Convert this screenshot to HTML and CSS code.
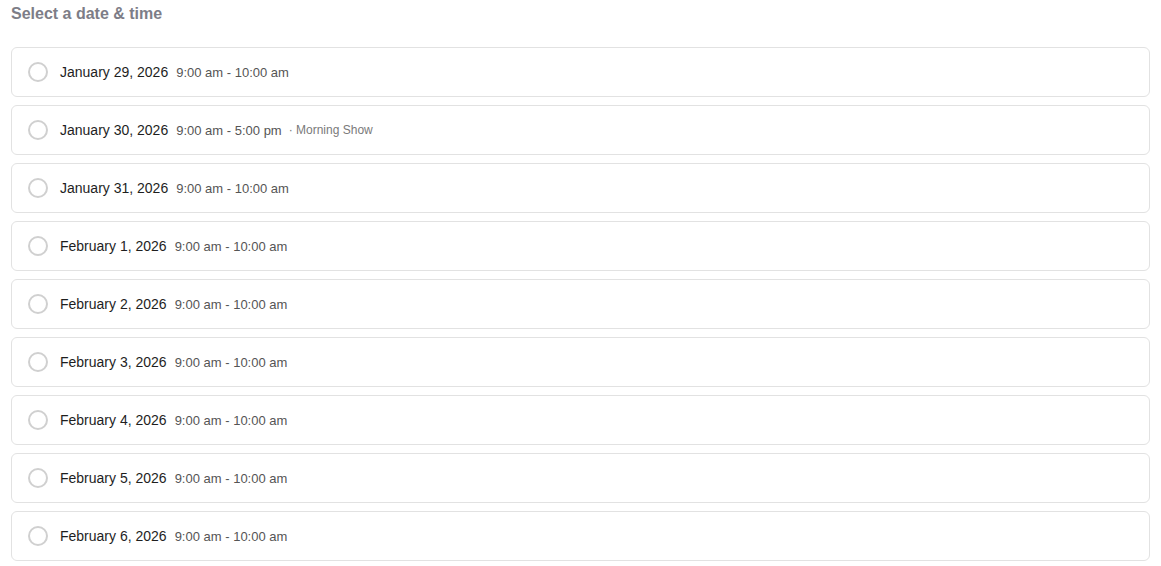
FILE: index.html
```html
<!DOCTYPE html>
<html lang="en">
<head>
  <meta charset="UTF-8">
  <meta name="viewport" content="width=device-width, initial-scale=1.0">
  <title>Select a date &amp; time</title>
  <link rel="stylesheet" href="styles.css">
</head>
<body>
  <div class="picker">
    <h2 class="picker-title">Select a date &amp; time</h2>

    <div class="slot-list">
      <label class="slot">
        <input type="radio" name="slot">
        <span class="slot-date">January 29, 2026</span>
        <span class="slot-time">9:00 am - 10:00 am</span>
      </label>
      <label class="slot">
        <input type="radio" name="slot">
        <span class="slot-date">January 30, 2026</span>
        <span class="slot-time">9:00 am - 5:00 pm</span>
        <span class="slot-note">· Morning Show</span>
      </label>
      <label class="slot">
        <input type="radio" name="slot">
        <span class="slot-date">January 31, 2026</span>
        <span class="slot-time">9:00 am - 10:00 am</span>
      </label>
      <label class="slot">
        <input type="radio" name="slot">
        <span class="slot-date">February 1, 2026</span>
        <span class="slot-time">9:00 am - 10:00 am</span>
      </label>
      <label class="slot">
        <input type="radio" name="slot">
        <span class="slot-date">February 2, 2026</span>
        <span class="slot-time">9:00 am - 10:00 am</span>
      </label>
      <label class="slot">
        <input type="radio" name="slot">
        <span class="slot-date">February 3, 2026</span>
        <span class="slot-time">9:00 am - 10:00 am</span>
      </label>
      <label class="slot">
        <input type="radio" name="slot">
        <span class="slot-date">February 4, 2026</span>
        <span class="slot-time">9:00 am - 10:00 am</span>
      </label>
      <label class="slot">
        <input type="radio" name="slot">
        <span class="slot-date">February 5, 2026</span>
        <span class="slot-time">9:00 am - 10:00 am</span>
      </label>
      <label class="slot">
        <input type="radio" name="slot">
        <span class="slot-date">February 6, 2026</span>
        <span class="slot-time">9:00 am - 10:00 am</span>
      </label>
    </div>
  </div>
</body>
</html>
```

FILE: styles.css
```css
body {
  font-family: "Liberation Sans", Arial, sans-serif;
  background: #fff;
  margin: 0;
}

.picker {
  padding: 4px 11px 0 11px;
}

.picker-title {
  font-size: 16px;
  font-weight: 700;
  color: #7d7d87;
  margin: 0 0 24px 0;
  line-height: 19px;
}

.slot-list {
  display: flex;
  flex-direction: column;
  gap: 8px;
}

.slot {
  display: flex;
  align-items: center;
  height: 48px;
  padding: 0 16px;
  border: 1px solid #e2e2e2;
  border-radius: 6px;
  background: #fff;
  cursor: pointer;
}

.slot input[type="radio"] {
  appearance: none;
  -webkit-appearance: none;
  width: 20px;
  height: 20px;
  margin: 0 12px 0 0;
  border: 2px solid #d0d0d0;
  border-radius: 50%;
  box-sizing: border-box;
  cursor: pointer;
}

.slot input[type="radio"]:checked {
  border: 6px solid #493971;
}

.slot-date {
  font-size: 14px;
  color: #1e1e1e;
  margin-right: 8px;
}

.slot-time {
  font-size: 13px;
  color: #555;
}

.slot-note {
  font-size: 12px;
  color: #7a7a7a;
  margin-left: 7px;
}
```
